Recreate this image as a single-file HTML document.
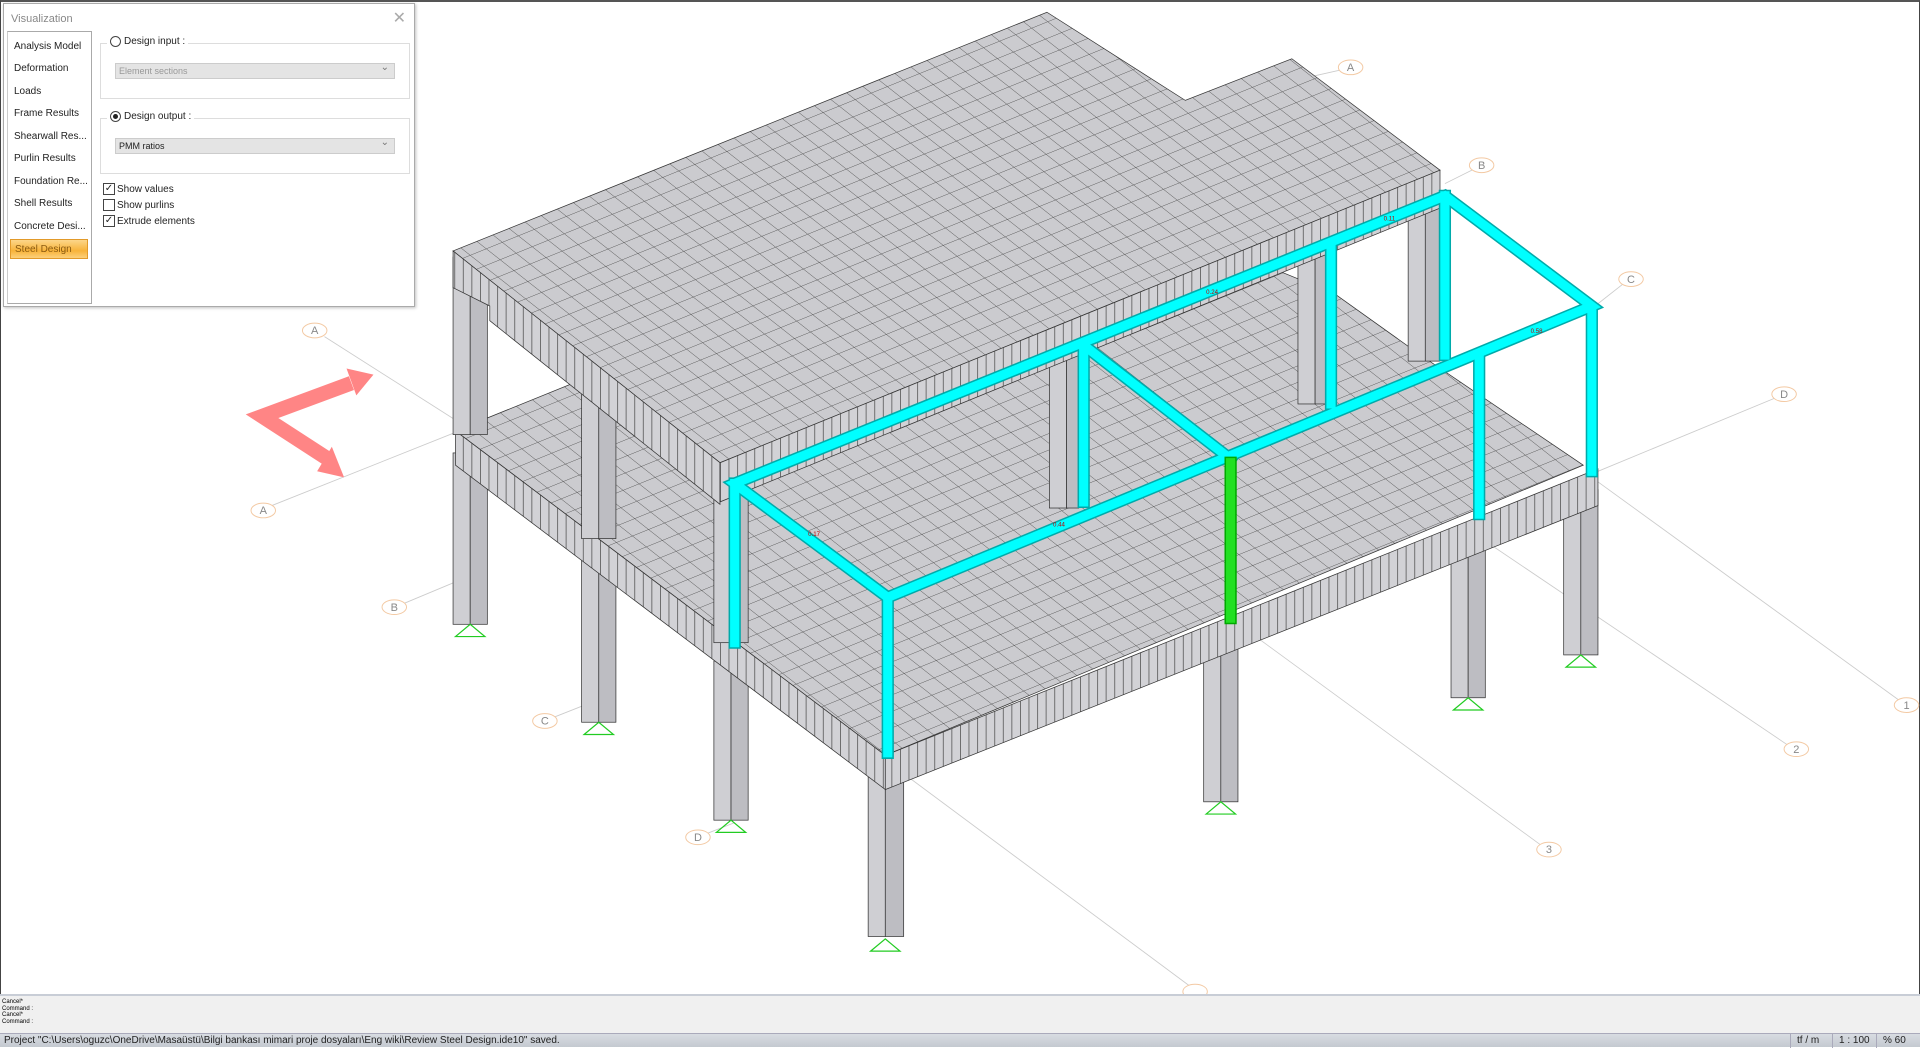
<!DOCTYPE html>
<html><head><meta charset="utf-8"><style>
*{margin:0;padding:0;box-sizing:border-box}
body{width:1920px;height:1047px;overflow:hidden;background:#fff;font-family:"Liberation Sans",sans-serif;position:relative}
#vp{position:absolute;left:0;top:0;width:1920px;height:994px;border:1px solid #444;border-bottom:none;border-top:2px solid #555}
svg{position:absolute;left:0;top:0}
#panel{position:absolute;left:3px;top:3px;width:412px;height:304px;background:#fff;border:1px solid #aaa;box-shadow:1px 1px 3px rgba(0,0,0,.25);font-size:10px;color:#222}
#panel .title{position:absolute;left:7px;top:9px;color:#888;font-size:11px}
#panel .close{position:absolute;right:8px;top:4px;color:#aaa;font-size:16px}
#list{position:absolute;left:3px;top:27px;width:85px;height:273px;border:1px solid #aaa;border-left-color:#ccc}
#list div{position:absolute;left:6px;font-size:10px;white-space:nowrap}
#list .sel{left:2px;width:78px;height:20px;background:linear-gradient(#fcd68a,#f8b33a 60%,#fcd07a);border:1px solid #e29a2a;color:#8a5a10;padding:4px 0 0 4px}
.grp{position:absolute;left:96px;width:310px;height:56px;border:1px solid #ddd}
.lbl{position:absolute;background:#fff;padding:0 3px;font-size:10px;display:flex;align-items:center;gap:3px}
.rad{width:11px;height:11px;border:1px solid #444;border-radius:50%;display:inline-block;position:relative}
.rad.on::after{content:"";position:absolute;left:2px;top:2px;width:5px;height:5px;border-radius:50%;background:#222}
.dd{position:absolute;left:14px;width:280px;height:16px;background:#e4e4e4;border:1px solid #ccc;font-size:9px;padding:2px 0 0 3px}
.dd::after{content:"⌄";position:absolute;right:5px;top:-2px;color:#777;font-size:10px}
.cb{position:absolute;left:99px;display:flex;align-items:center;gap:2px;font-size:10px}
.cb span{width:12px;height:12px;border:1px solid #444;display:inline-block;font-size:10px;line-height:10px;text-align:center}
#cmd{position:absolute;left:0;top:994px;width:1920px;height:39px;background:#f0f0f0;border-top:2px solid #c8cdd6;font-size:6px;line-height:6.5px;padding:3px 0 0 2px;color:#000}
#status{position:absolute;left:0;top:1033px;width:1920px;height:14px;background:linear-gradient(#d8dce2,#c4c9d0);font-size:10px;color:#222;padding:1px 0 0 4px;border-top:1px solid #aab}
#status .c{position:absolute;top:0;height:14px;border-left:1px solid #aab;padding:1px 0 0 6px}
</style></head><body>
<div id="vp"></div>
<svg width="1920" height="994" viewBox="0 0 1568 812" preserveAspectRatio="none">
<defs>
<pattern id="g" patternUnits="userSpaceOnUse" width="1" height="1" patternTransform="matrix(13.1 -5.3 11.3 8.9 0 0)">
<rect width="1" height="1" fill="#cbcbcf"/><path d="M0 0H1M0 0V1" stroke="#555" stroke-width="0.055" fill="none"/>
</pattern>
<pattern id="f" patternUnits="userSpaceOnUse" width="7" height="10">
<rect width="7" height="10" fill="#d2d2d6"/><path d="M0.3 0V10" stroke="#555" stroke-width="0.7"/>
</pattern>
</defs>
<g stroke="#ccc" stroke-width="0.7" fill="none">
<path d="M222 413L380 350"/><path d="M265 275L375 345"/><path d="M325 495L380 472"/><path d="M447 588L485 573"/><path d="M572 683L600 672"/>
<path d="M1300 390L1555 575"/><path d="M1210 440L1465 612"/><path d="M1005 505L1262 693"/><path d="M738 632L975 808"/>
<path d="M1305 385L1450 325"/><path d="M1300 252L1328 230"/><path d="M1180 150L1208 136"/><path d="M1060 65L1100 56"/>
</g>
<g fill="#fff" stroke="#f3c9a3" stroke-width="0.8">
<ellipse cx="257" cy="270" rx="10" ry="6"/><ellipse cx="215" cy="417" rx="10" ry="6"/><ellipse cx="322" cy="496" rx="10" ry="6"/><ellipse cx="445" cy="589" rx="10" ry="6"/><ellipse cx="570" cy="684" rx="10" ry="6"/>
<ellipse cx="1103" cy="55" rx="10" ry="6"/><ellipse cx="1210" cy="135" rx="10" ry="6"/><ellipse cx="1332" cy="228" rx="10" ry="6"/><ellipse cx="1457" cy="322" rx="10" ry="6"/>
<ellipse cx="1557" cy="576" rx="10" ry="6"/><ellipse cx="1467" cy="612" rx="10" ry="6"/><ellipse cx="1265" cy="694" rx="10" ry="6"/><ellipse cx="976" cy="810" rx="10" ry="6"/>
</g>
<g font-size="9" fill="#888" font-family="Liberation Sans" text-anchor="middle">
<text x="257" y="273">A</text><text x="215" y="420">A</text><text x="322" y="499">B</text><text x="445" y="592">C</text><text x="570" y="687">D</text>
<text x="1103" y="58">A</text><text x="1210" y="138">B</text><text x="1332" y="231">C</text><text x="1457" y="325">D</text>
<text x="1557" y="579">1</text><text x="1467" y="615">2</text><text x="1265" y="697">3</text>
</g>
<path d="M287 313L214 340L268 375" fill="none" stroke="#ff8585" stroke-width="12" stroke-linejoin="miter"/>
<g fill="#ff8585">
<path d="M305 306L291 323L283 301Z"/>
<path d="M281 390L271 365L259 385Z"/>
</g>
<g stroke="#333" stroke-width="0.6">
<g><rect x="370" y="370" width="14" height="140" fill="#cfcfd3"/><rect x="384" y="370" width="14" height="140" fill="#bdbdc2"/></g>
<g><rect x="475" y="455" width="14" height="135" fill="#cfcfd3"/><rect x="489" y="455" width="14" height="135" fill="#bdbdc2"/></g>
<g><rect x="583" y="540" width="14" height="130" fill="#cfcfd3"/><rect x="597" y="540" width="14" height="130" fill="#bdbdc2"/></g>
<g><rect x="709" y="630" width="14" height="135" fill="#cfcfd3"/><rect x="723" y="630" width="15" height="135" fill="#bdbdc2"/></g>
<g><rect x="983" y="520" width="14" height="135" fill="#cfcfd3"/><rect x="997" y="520" width="14" height="135" fill="#bdbdc2"/></g>
<g><rect x="1185" y="435" width="14" height="135" fill="#cfcfd3"/><rect x="1199" y="435" width="14" height="135" fill="#bdbdc2"/></g>
<g><rect x="1277" y="400" width="14" height="135" fill="#cfcfd3"/><rect x="1291" y="400" width="14" height="135" fill="#bdbdc2"/></g>
</g>
<g stroke="#2c2" stroke-width="1" fill="none">
<path d="M372 520L384 510L396 520Z"/><path d="M477 600L489 590L501 600Z"/><path d="M585 680L597 670L609 680Z"/><path d="M711 777L723 767L735 777Z"/><path d="M985 665L997 655L1009 665Z"/><path d="M1187 580L1199 570L1211 580Z"/><path d="M1279 545L1291 535L1303 545Z"/>
</g>
<g stroke="#333" stroke-width="0.6">
<polygon points="372,352 870,150 1090,240 1160,290 1293,380 723,617" fill="url(#g)"/>
<polygon points="372,352 723,617 723,645 372,380" fill="url(#f)"/>
<polygon points="723,617 1305,383 1305,413 723,645" fill="url(#f)"/>
</g>
<g stroke="#333" stroke-width="0.6">
<rect x="370" y="210" width="14" height="145" fill="#cfcfd3"/><rect x="384" y="210" width="14" height="145" fill="#bdbdc2"/>
<rect x="475" y="295" width="14" height="145" fill="#cfcfd3"/><rect x="489" y="295" width="14" height="145" fill="#bdbdc2"/>
<rect x="583" y="380" width="14" height="145" fill="#cfcfd3"/><rect x="597" y="380" width="14" height="145" fill="#bdbdc2"/>
<rect x="857" y="270" width="14" height="145" fill="#cfcfd3"/><rect x="871" y="270" width="10" height="145" fill="#bdbdc2"/>
<rect x="1060" y="200" width="14" height="130" fill="#cfcfd3"/><rect x="1074" y="200" width="10" height="130" fill="#bdbdc2"/>
<rect x="1150" y="160" width="14" height="135" fill="#cfcfd3"/><rect x="1164" y="160" width="12" height="135" fill="#bdbdc2"/>
</g>
<g stroke="#333" stroke-width="0.6">
<polygon points="370,205 855,10 968,82 1055,48 1176,139 588,378" fill="url(#g)"/>
<polygon points="370,205 588,378 588,412 400,262 400,250 370,235" fill="url(#f)"/>
<polygon points="588,378 1176,139 1176,170 588,410" fill="url(#f)"/>
</g>
<g stroke-linecap="square" fill="none">
<g stroke="#0aa" stroke-width="10">
<path d="M600 395V525M725 488V615M885 282V410M1180 160V290M1300 255V385M1087 200V330M1208 292V420"/>
<path d="M600 395L1180 160L1300 250L725 488Z M885 282L1005 375"/>
</g>
<g stroke="#00ffff" stroke-width="7.5">
<path d="M600 395V525M725 488V615M885 282V410M1180 160V290M1300 255V385M1087 200V330M1208 292V420"/>
<path d="M600 395L1180 160L1300 250L725 488Z M885 282L1005 375"/>
</g>
<path d="M1005 378V505" stroke="#0a0" stroke-width="10"/><path d="M1005 378V505" stroke="#22e022" stroke-width="7.5"/>
</g>
<g font-size="5" fill="#b00" font-family="Liberation Sans">
<text x="660" y="438">0.17</text><text x="1130" y="180">0.11</text><text x="985" y="240">0.24</text><text x="1250" y="272">0.58</text><text x="860" y="430">0.44</text>
</g>
</svg>
<div id="panel">
<div class="title">Visualization</div><div class="close">✕</div>
<div id="list">
<div style="top:9px">Analysis Model</div><div style="top:31px">Deformation</div><div style="top:54px">Loads</div><div style="top:76px">Frame Results</div><div style="top:99px">Shearwall Res...</div><div style="top:121px">Purlin Results</div><div style="top:144px">Foundation Re...</div><div style="top:166px">Shell Results</div><div style="top:189px">Concrete Desi...</div><div class="sel" style="top:207px">Steel Design</div>
</div>
<div class="grp" style="top:39px"><div class="lbl" style="left:6px;top:-8px"><span class="rad"></span>Design input :</div><div class="dd" style="top:19px;color:#999">Element sections</div></div>
<div class="grp" style="top:114px"><div class="lbl" style="left:6px;top:-8px"><span class="rad on"></span>Design output :</div><div class="dd" style="top:19px">PMM ratios</div></div>
<div class="cb" style="top:179px"><span>✓</span>Show values</div>
<div class="cb" style="top:195px"><span></span>Show purlins</div>
<div class="cb" style="top:211px"><span>✓</span>Extrude elements</div>
</div>
<div id="cmd">Cancel*<br>Command :<br>Cancel*<br>Command :</div>
<div id="status">Project "C:\Users\oguzc\OneDrive\Masaüstü\Bilgi bankası mimari proje dosyaları\Eng wiki\Review Steel Design.ide10" saved.
<div class="c" style="left:1790px">tf / m</div><div class="c" style="left:1832px">1 : 100</div><div class="c" style="left:1876px">% 60</div></div>
</body></html>
